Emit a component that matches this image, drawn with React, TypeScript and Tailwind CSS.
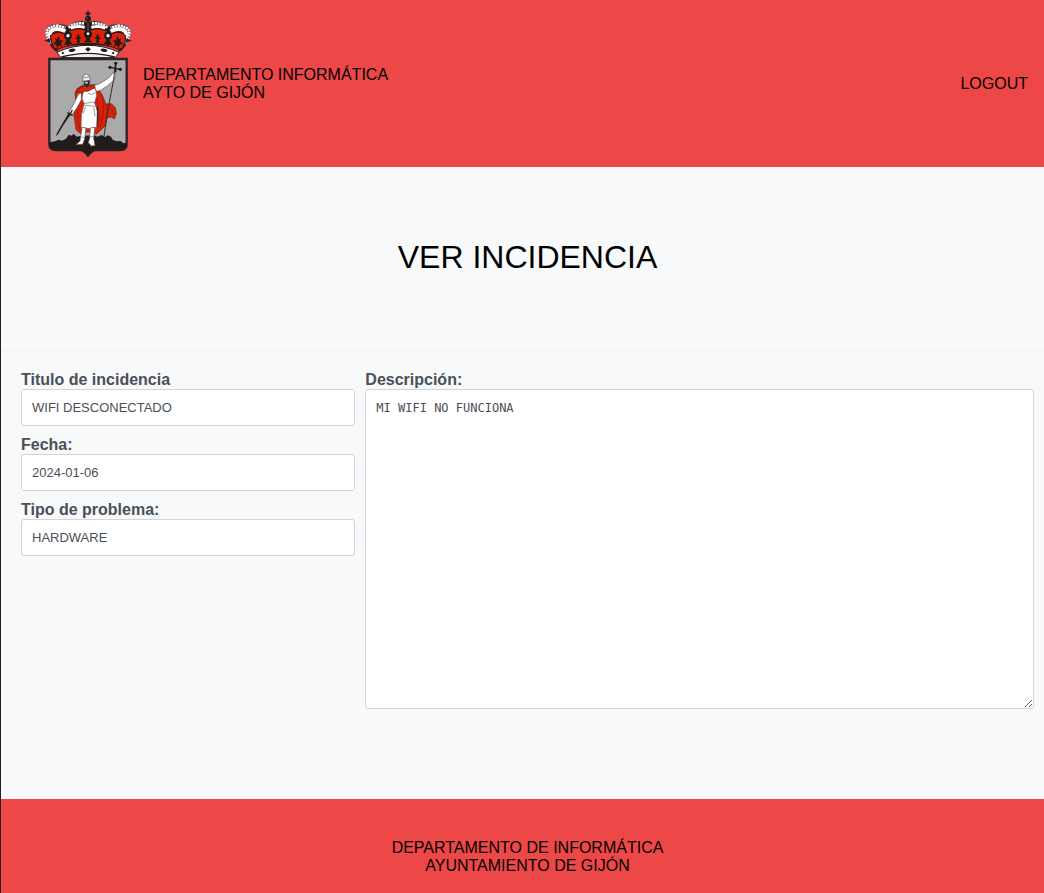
import React from 'react';

function CoatOfArms() {
  return (
    <svg
      viewBox="126 24 276 450"
      className="h-[150px] w-[92px] shrink-0"
      role="img"
      aria-label="Escudo de Gijón"
    >
      {/* crown arches */}
      <path d="M152 134 Q134 110 136 90 Q144 69 173 69 Q190 68 204 76 Q222 60 248 60 L264 64 L280 60 Q306 60 324 76 Q340 68 358 69 Q386 70 392 90 Q394 110 376 134 Z" fill="#211c1a" stroke="#6b5a57" strokeWidth="2" />
      <path d="M154 130 Q139 108 140 91 Q147 75 174 74 L196 80" fill="none" stroke="#f7f3f1" strokeWidth="8" strokeDasharray="7 1.5" />
      <path d="M374 130 Q389 108 388 91 Q381 75 354 74 L332 80" fill="none" stroke="#f7f3f1" strokeWidth="8" strokeDasharray="7 1.5" />
      <path d="M206 80 Q222 65 252 67 M322 80 Q306 65 276 67" fill="none" stroke="#f7f3f1" strokeWidth="8" strokeDasharray="7 1.5" />
      <path d="M153 112 Q143 92 162 85 Q180 81 196 91 M375 112 Q385 92 366 85 Q348 81 332 91" fill="none" stroke="#fff" strokeWidth="12" />
      <path d="M212 82 Q230 73 254 79 M316 82 Q298 73 274 79" fill="none" stroke="#fff" strokeWidth="9" />
      {/* crown red cap */}
      <path d="M151 104 Q166 88 194 98 Q226 76 254 87 L264 94 L274 87 Q302 76 334 98 Q362 88 377 104 Q378 126 364 148 Q312 126 264 127 Q216 126 165 148 Q152 126 151 104 Z" fill="#dd2008" stroke="#211c1a" strokeWidth="3" />
      <g fill="#211c1a">
        <path d="M176 105 l4 13 11 1 -9 7 5 12 -10 -6 -5 10 -4 -12 -10 -1 10 -8 -4 -9 8 3Z" />
        <path d="M235 96 l4 11 6 5 -7 3 2 10 h-10 l2 -10 -7 -3 6 -5Z" />
        <path d="M293 96 l4 11 6 5 -7 3 2 10 h-10 l2 -10 -7 -3 6 -5Z" />
        <path d="M352 105 l-4 13 -11 1 9 7 -5 12 10 -6 5 10 4 -12 10 -1 -10 -8 4 -9 -8 3Z" />
        <circle cx="204" cy="104" r="12" />
        <circle cx="264" cy="100" r="12" />
        <circle cx="324" cy="104" r="12" />
        <path d="M200 108 h8 l3 14 7 8 -9 -1 -5 8 -5 -7 -8 3 6 -11Z M260 108 h8 l4 12 7 4 h-30 l7 -4Z M320 108 h8 l3 14 6 11 -8 -3 -5 7 -5 -8 -9 1 7 -8Z" />
        <path d="M130 118 L139 118 148 110 151 126 164 142 171 142 174 154 Q154 146 148 124Z M398 118 L389 118 380 110 377 126 364 142 357 142 354 154 Q374 146 380 124Z" />
      </g>
      <circle cx="204" cy="104" r="5" fill="#fff" />
      <circle cx="264" cy="98" r="4" fill="#fff" />
      <circle cx="324" cy="104" r="5" fill="#fff" />
      {/* crown band */}
      <path d="M171 154 Q215 133 264 133 Q313 133 357 154 L347 169 H181 Z" fill="#fff" stroke="#211c1a" strokeWidth="3" />
      <path d="M184 168 Q226 157 264 157 Q302 157 344 168" fill="#f3f1f0" stroke="#211c1a" strokeWidth="4" />
      <g fill="#211c1a">
        <ellipse cx="216" cy="148" rx="10" ry="5" transform="rotate(-8 216 148)" />
        <ellipse cx="312" cy="148" rx="10" ry="5" transform="rotate(8 312 148)" />
        <path d="M264 138 l9 7 -9 7 -9 -7Z M188 152 l6 4 -6 4 -4 -4Z M340 152 l-6 4 6 4 4 -4Z" />
      </g>
      {/* crown cross */}
      <path d="M264 30 V94 M256 38 H272" stroke="#211c1a" strokeWidth="5" fill="none" />
      <circle cx="264" cy="53" r="9" fill="#211c1a" />
      <circle cx="261" cy="51" r="2" fill="#77716f" />
      <path d="M264 66 V90" stroke="#9a7772" strokeWidth="2" />

      {/* shield */}
      <path d="M148 174 H380 V430 Q380 447 362 447 H285 Q272 452 264 464 Q256 452 243 447 H166 Q148 447 148 430 Z" fill="#aaaaaa" stroke="#2b2624" strokeWidth="7" />
      <path d="M149 424 L166 421 176 416 186 419 198 413 206 401 215 404 221 398 230 407 244 404 284 403 292 407 304 402 316 408 323 403 333 407 338 416 350 421 362 420 370 427 379 425 V435 Q378 446 363 448 H285 Q272 453 264 466 Q256 453 243 448 H165 Q149 446 149 430Z" fill="#211c1a" />

      {/* cape */}
      <path d="M246 254 L231 263 225 276 229 310 222 342 228 386 245 400 264 392 290 399 316 374 322 350 334 348 343 354 349 338 346 320 334 308 318 309 305 279 287 251Z" fill="#dd2008" stroke="#54201a" strokeWidth="2" />
      <path d="M235 316 Q228 350 241 390 M305 282 Q319 318 300 381 M316 310 Q326 332 316 349 M326 318 Q338 322 340 342 M291 290 L300 364 M239 269 L252 280" fill="none" stroke="#82180f" strokeWidth="2" />
      {/* raised and lowered arms */}
      <path d="M277 254 L297 249 326 231 341 213 348 222 341 238 323 254 302 268 290 271Z" fill="#fff" stroke="#58514e" strokeWidth="2" />
      <path d="M244 272 L234 281 224 304 207 333 216 341 232 319 244 296Z" fill="#fff" stroke="#58514e" strokeWidth="2" />
      {/* tunic */}
      <path d="M251 267 L286 261 290 283 284 306 292 330 290 378 271 383 243 380 244 343 252 308 246 292Z" fill="#fff" stroke="#58514e" strokeWidth="2" />
      <path d="M249 308 L283 303 290 318 M250 312 L284 316 M256 317 L250 337 M281 320 L285 346 M264 277 Q274 284 286 275" fill="none" stroke="#69625f" strokeWidth="2" />
      <path d="M292 318 L294 378" stroke="#3a2320" strokeWidth="3" />
      <path d="M242 277 Q251 268 264 271 L286 259 282 252 245 257 229 270Z" fill="#dd2008" stroke="#54201a" strokeWidth="2" />
      {/* head and beard */}
      <path d="M248 228 L252 221 260 219 268 224 271 239 268 253 258 260 250 251Z" fill="#eceaea" stroke="#5d5652" strokeWidth="2" />
      <path d="M247 240 L255 239 269 237 269 252 260 261 251 252 253 243Z" fill="#302b29" />
      <path d="M256 242 h7 v6 h-7Z" fill="#dad6d4" />
      <path d="M247 227 L258 230 270 226" fill="none" stroke="#686260" strokeWidth="2" />
      {/* legs */}
      <path d="M246 379 L258 381 254 414 248 430 228 431 240 420Z M271 381 L285 378 281 411 285 434 274 435 265 425 269 411Z" fill="#fff" stroke="#58514e" strokeWidth="2" />
      <path d="M244 408 L254 410 M270 408 L280 406" stroke="#77716f" strokeWidth="2" />
      {/* sword */}
      <path d="M211 341 L190 373 173 401 168 405 171 396 204 339Z" fill="#211c1a" />
      <path d="M202 335 L218 343 M208 344 L217 327" stroke="#211c1a" strokeWidth="4" />
      {/* staff */}
      <path d="M345 194 L341 235 325 320 312 405" fill="none" stroke="#342d2a" strokeWidth="3" />
      <path d="M347 187 V214 M330 199 L361 205" stroke="#211c1a" strokeWidth="4" />
      <g fill="#211c1a">
        <circle cx="347" cy="187" r="5" />
        <circle cx="330" cy="199" r="5" />
        <circle cx="361" cy="205" r="5" />
      </g>
    </svg>
  );
}

const fields = [
  { id: 'titulo', label: 'Titulo de incidencia', value: 'WIFI DESCONECTADO' },
  { id: 'fecha', label: 'Fecha:', value: '2024-01-06' },
  { id: 'tipo', label: 'Tipo de problema:', value: 'HARDWARE' },
];

export default function App() {
  return (
    <div className="flex min-h-screen flex-col border-l border-[#202124] bg-[#f8f9fb] font-['Liberation_Sans',Arial,sans-serif] text-base leading-[18px] text-black">
      <header className="flex items-center justify-between bg-[#ed4747] pt-[9px] pr-4 pb-2 pl-[41px]">
        <div className="flex items-center gap-[9px]">
          <CoatOfArms />
          <p>
            DEPARTAMENTO INFORMÁTICA
            <br />
            AYTO DE GIJÓN
          </p>
        </div>
        <a href="#logout">LOGOUT</a>
      </header>

      <main className="flex flex-1 flex-col">
        <div className="border-b border-[#f1f2f4] pt-[70px] pb-[73px] pl-2.5 text-center">
          <h1 className="text-[32px] leading-10">VER INCIDENCIA</h1>
        </div>
        <form className="grid grid-cols-[1fr_2fr] gap-2.5 pt-5 pr-2.5 pb-22 pl-5 text-[#495057]">
          <div className="flex flex-col gap-2.5">
            {fields.map((field) => (
              <div key={field.id} className="flex flex-col">
                <label htmlFor={field.id} className="font-bold">
                  {field.label}
                </label>
                <input
                  id={field.id}
                  type="text"
                  readOnly
                  defaultValue={field.value}
                  className="h-[37px] w-full rounded-[3px] border border-[#ced4da] bg-white px-2.5 text-[13px]"
                />
              </div>
            ))}
          </div>
          <div className="flex flex-col">
            <label htmlFor="descripcion" className="font-bold">
              Descripción:
            </label>
            <textarea
              id="descripcion"
              readOnly
              defaultValue="MI WIFI NO FUNCIONA"
              className="h-80 w-full resize rounded-[3px] border border-[#ced4da] bg-white p-2.5 font-['DejaVu_Sans_Mono',monospace] text-xs"
            />
          </div>
        </form>
      </main>

      <footer className="bg-[#ed4747] pt-10 pb-[18px] pl-2.5 text-center">
        <p>
          DEPARTAMENTO DE INFORMÁTICA
          <br />
          AYUNTAMIENTO DE GIJÓN
        </p>
      </footer>
    </div>
  );
}
